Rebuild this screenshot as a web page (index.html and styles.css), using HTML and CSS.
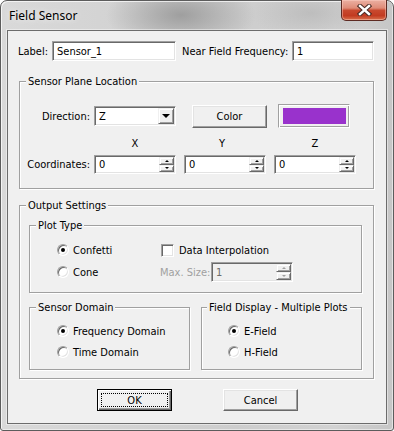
FILE: index.html
```html
<!DOCTYPE html>
<html>
<head>
<meta charset="utf-8">
<title>Field Sensor</title>
<link rel="stylesheet" href="styles.css">
</head>
<body>
<div class="window">
  <div class="titlebar">
    <span class="title">Field Sensor</span>
    <div class="close">
      <svg width="17" height="12" viewBox="0 0 17 12">
        <path d="M4 2 L13 10 M13 2 L4 10" stroke="#4a2a24" stroke-width="4.4" stroke-linecap="square" fill="none"/>
        <path d="M4 2 L13 10 M13 2 L4 10" stroke="#ffffff" stroke-width="2.4" stroke-linecap="square" fill="none"/>
      </svg>
    </div>
  </div>
  <div class="client">
    <div class="row1">
      <span class="lbl l-label">Label:</span>
      <div class="edit w-label"><span class="val">Sensor_1</span></div>
      <span class="lbl l-freq">Near Field Frequency:</span>
      <div class="edit w-freq"><span class="val">1</span></div>
    </div>

    <fieldset class="grp g-plane">
      <legend>Sensor Plane Location</legend>
      <div class="body plane-body">
        <div class="dir-row">
          <span class="rlbl">Direction:</span>
          <div class="combo"><span class="val">Z</span><span class="ddbtn"><span class="tri-dn"></span></span></div>
          <div class="btn b-color">Color</div>
          <div class="swatch"><div class="swatch-fill"></div></div>
        </div>
        <div class="axis-row">
          <span class="axis">X</span><span class="axis ay">Y</span><span class="axis">Z</span>
        </div>
        <div class="coord-row">
          <span class="rlbl">Coordinates:</span>
          <div class="spin"><span class="val">0</span><span class="spinbtns"><span class="sb"><span class="tri-up"></span></span><span class="sb"><span class="tri-dn small"></span></span></span></div>
          <div class="spin"><span class="val">0</span><span class="spinbtns"><span class="sb"><span class="tri-up"></span></span><span class="sb"><span class="tri-dn small"></span></span></span></div>
          <div class="spin"><span class="val">0</span><span class="spinbtns"><span class="sb"><span class="tri-up"></span></span><span class="sb"><span class="tri-dn small"></span></span></span></div>
        </div>
      </div>
    </fieldset>

    <fieldset class="grp g-out">
      <legend>Output Settings</legend>
      <div class="body out-body">
        <fieldset class="grp g-plot">
          <legend>Plot Type</legend>
          <div class="body plot-body">
            <div class="plot-row">
              <div class="opt c-left"><span class="radio on"></span>Confetti</div>
              <div class="opt c-check"><span class="check"></span>Data Interpolation</div>
            </div>
            <div class="plot-row r2">
              <div class="opt c-left"><span class="radio"></span>Cone</div>
              <span class="dis-lbl">Max. Size:</span>
              <div class="spin disabled"><span class="val">1</span><span class="spinbtns"><span class="sb"><span class="tri-up"></span></span><span class="sb"><span class="tri-dn small"></span></span></span></div>
            </div>
          </div>
        </fieldset>
        <div class="pair">
          <fieldset class="grp g-half">
            <legend>Sensor Domain</legend>
            <div class="body half-body dom-body">
              <div class="opt"><span class="radio on"></span>Frequency Domain</div>
              <div class="opt r2"><span class="radio"></span>Time Domain</div>
            </div>
          </fieldset>
          <fieldset class="grp g-half g-fd">
            <legend>Field Display - Multiple Plots</legend>
            <div class="body half-body fd-body">
              <div class="opt"><span class="radio on"></span>E-Field</div>
              <div class="opt r2"><span class="radio"></span>H-Field</div>
            </div>
          </fieldset>
        </div>
      </div>
    </fieldset>

    <div class="buttons">
      <div class="btn b-ok"><span class="focus">OK</span></div>
      <div class="btn b-cancel">Cancel</div>
    </div>
  </div>
</div>
</body>
</html>
```
FILE: styles.css
```css
* { box-sizing: border-box; }
html, body { margin: 0; padding: 0; }
body {
  width: 394px;
  height: 431px;
  overflow: hidden;
  background: #ffffff;
  font-family: "DejaVu Sans Condensed", "Liberation Sans", sans-serif;
  font-size: 11px;
  line-height: 13px;
  color: #000;
}

.window {
  width: 394px;
  height: 431px;
  border: 1px solid #5c5c5c;
  border-radius: 7px 7px 3px 3px;
  padding: 0 6px 6px 6px;
  display: flex;
  flex-direction: column;
  background:
    radial-gradient(ellipse 75px 34px at 180px 14px, rgba(150,150,150,0.85), rgba(150,150,150,0) 100%),
    radial-gradient(ellipse 60px 26px at 310px 12px, rgba(170,170,170,0.5), rgba(170,170,170,0) 100%),
    linear-gradient(to right, #d9d9d9 0%, #d3d3d3 30%, #cdcdcd 60%, #d2d2d2 85%, #c6c6c6 100%);
  box-shadow: inset 1px 1px 0 rgba(255,255,255,0.7), inset -1px -1px 0 rgba(255,255,255,0.5);
}

.titlebar {
  height: 29px;
  display: flex;
  align-items: flex-start;
}
.title {
  font-family: "Noto Sans", "Open Sans", sans-serif;
  font-size: 12px;
  line-height: 16px;
  padding: 7px 0 0 2px;
  color: #000;
  text-shadow: 0 0 6px rgba(255,255,255,0.9);
}
.close {
  margin-left: auto;
  margin-top: -1px;
  width: 46px;
  height: 21px;
  border: 1px solid #5d2a22;
  border-top: none;
  border-radius: 0 0 5px 5px;
  background: linear-gradient(#ebb0a2 0%, #df8c78 40%, #c8492f 52%, #c23b21 78%, #d9704c 100%);
  box-shadow: inset 0 0 0 1px rgba(255,210,200,0.45);
  display: flex;
  align-items: center;
  justify-content: center;
}

.client {
  flex: 1;
  border: 1px solid #6c6c6c;
  background: #f0f0f0;
  padding: 0 12px 0 11px;
  display: flex;
  flex-direction: column;
  box-shadow: 0 0 0 1px rgba(255,255,255,0.45);
}

/* sunken edit */
.edit, .spin, .combo {
  background: #fff;
  border: 1px solid;
  border-color: #a0a0a0 #ffffff #ffffff #a0a0a0;
  box-shadow: inset 1px 1px 0 #696969, inset -1px -1px 0 #e3e3e3;
  display: flex;
  align-items: center;
  padding: 1px;
}
.val { flex: 1; padding-left: 3px; white-space: nowrap; }

.row1 {
  display: flex;
  align-items: center;
  margin: 10px 0 0 -1px;
  height: 20px;
}
.lbl { white-space: nowrap; }
.l-label { width: 34px; }
.l-freq { width: 110px; margin-left: 6px; }
.w-label { width: 124px; height: 20px; }
.w-freq { width: 82px; height: 20px; }

/* group boxes */
.grp {
  margin: 0;
  padding: 0;
  min-width: 0;
  border: 1px solid #a0a0a0;
  box-shadow: inset 1px 1px 0 #fff, 1px 1px 0 #fff;
}
.grp > legend {
  padding: 0 2px;
  margin-left: 6px;
  line-height: 13px;
  background: #f0f0f0;
}
.g-plane { margin-top: 14px; }
.plane-body { padding: 16px 0 14px 0; }

.dir-row, .coord-row {
  display: flex;
  align-items: center;
}
.dir-row { height: 24px; }
.rlbl { width: 70px; text-align: right; margin-right: 4px; white-space: nowrap; }
.combo { width: 82px; height: 20px; }
.ddbtn {
  width: 16px;
  height: 16px;
  background: #f0f0f0;
  border: 1px solid;
  border-color: #f0f0f0 #696969 #696969 #f0f0f0;
  box-shadow: inset 1px 1px 0 #fff, inset -1px -1px 0 #a0a0a0;
  display: flex;
  align-items: center;
  justify-content: center;
}
.tri-dn {
  width: 0; height: 0;
  border-left: 4px solid transparent;
  border-right: 4px solid transparent;
  border-top: 4px solid #000;
}
.tri-dn.small, .tri-up {
  width: 0; height: 0;
  border-left: 2px solid transparent;
  border-right: 2px solid transparent;
}
.tri-dn.small { border-top: 2px solid #000; }
.tri-up { border-bottom: 2px solid #000; }

.btn {
  background: #f0f0f0;
  border: 1px solid;
  border-color: #ffffff #696969 #696969 #ffffff;
  box-shadow: inset -1px -1px 0 #a0a0a0, inset 1px 1px 0 #e3e3e3;
  display: flex;
  align-items: center;
  justify-content: center;
}
.b-color { width: 75px; height: 23px; margin-left: 16px; }
.swatch {
  width: 72px;
  height: 24px;
  margin-left: 11px;
  border: 1px solid;
  border-color: #a0a0a0 #ffffff #ffffff #a0a0a0;
  box-shadow: inset 1px 1px 0 #fff, inset -1px -1px 0 #a0a0a0;
  padding: 3px 3px 3px 4px;
}
.swatch-fill { width: 100%; height: 100%; background: #9932cc; }

.axis-row {
  display: flex;
  margin: 9px 0 0 74px;
  height: 13px;
}
.axis { width: 82px; text-align: center; margin-right: 8px; }
.axis.ay { padding-right: 6px; }

.coord-row { margin-top: 5px; }
.coord-row .spin { width: 82px; height: 19px; margin-right: 8px; }

.spinbtns {
  width: 15px;
  align-self: stretch;
  display: flex;
  flex-direction: column;
}
.sb {
  flex: 1;
  background: #f0f0f0;
  border: 1px solid;
  border-color: #f0f0f0 #696969 #696969 #f0f0f0;
  box-shadow: inset 1px 1px 0 #fff, inset -1px -1px 0 #a0a0a0;
  display: flex;
  align-items: center;
  justify-content: center;
}

.g-out { margin-top: 10px; }
.out-body { padding: 7px 11px 8px 9px; }
.plot-body { padding: 8px 0 10px 27px; }
.plot-row { display: flex; align-items: center; height: 20px; }
.plot-row.r2 { margin-top: 2px; }

.opt { display: flex; align-items: center; height: 20px; white-space: nowrap; }
.c-left { width: 103px; }
.c-check { margin-left: 1px; }

.radio {
  width: 12px;
  height: 12px;
  border-radius: 50%;
  background: #fff;
  border: 1px solid;
  border-color: #a0a0a0 #ffffff #ffffff #a0a0a0;
  box-shadow: inset 1px 1px 0 #696969, inset -1px -1px 0 #e3e3e3;
  margin-right: 4px;
  display: flex;
  align-items: center;
  justify-content: center;
}
.radio.on::after {
  content: "";
  width: 4px;
  height: 4px;
  border-radius: 50%;
  background: #000;
}
.check {
  width: 13px;
  height: 13px;
  background: #fff;
  border: 1px solid;
  border-color: #a0a0a0 #ffffff #ffffff #a0a0a0;
  box-shadow: inset 1px 1px 0 #696969, inset -1px -1px 0 #e3e3e3;
  margin-right: 5px;
}
.dis-lbl { width: 51px; color: #a0a0a0; white-space: nowrap; }
.spin.disabled { width: 82px; height: 20px; background: #f0f0f0; color: #6d6d6d; }
.spin.disabled .tri-up { border-bottom-color: #a0a0a0; }
.spin.disabled .tri-dn.small { border-top-color: #a0a0a0; }

.pair { display: flex; gap: 11px; margin-top: 8px; }
.g-half { flex: 1; }
.g-fd > legend { margin-left: 5px; }
.half-body { padding: 7px 0 7px 27px; }
.fd-body { padding-left: 26px; }
.half-body .r2 { margin-top: 1px; }

.buttons {
  display: flex;
  gap: 51px;
  margin-top: 10px;
  padding-left: 78px;
}
.b-ok, .b-cancel { width: 75px; height: 22px; }
.b-ok {
  border: 1px solid #000;
  box-shadow: inset 1px 1px 0 #fff, inset -1px -1px 0 #696969, inset -2px -2px 0 #a0a0a0;
  padding: 3px;
}
.focus {
  flex: 1;
  align-self: stretch;
  border: 1px dotted #000;
  display: flex;
  align-items: center;
  justify-content: center;
}
```
